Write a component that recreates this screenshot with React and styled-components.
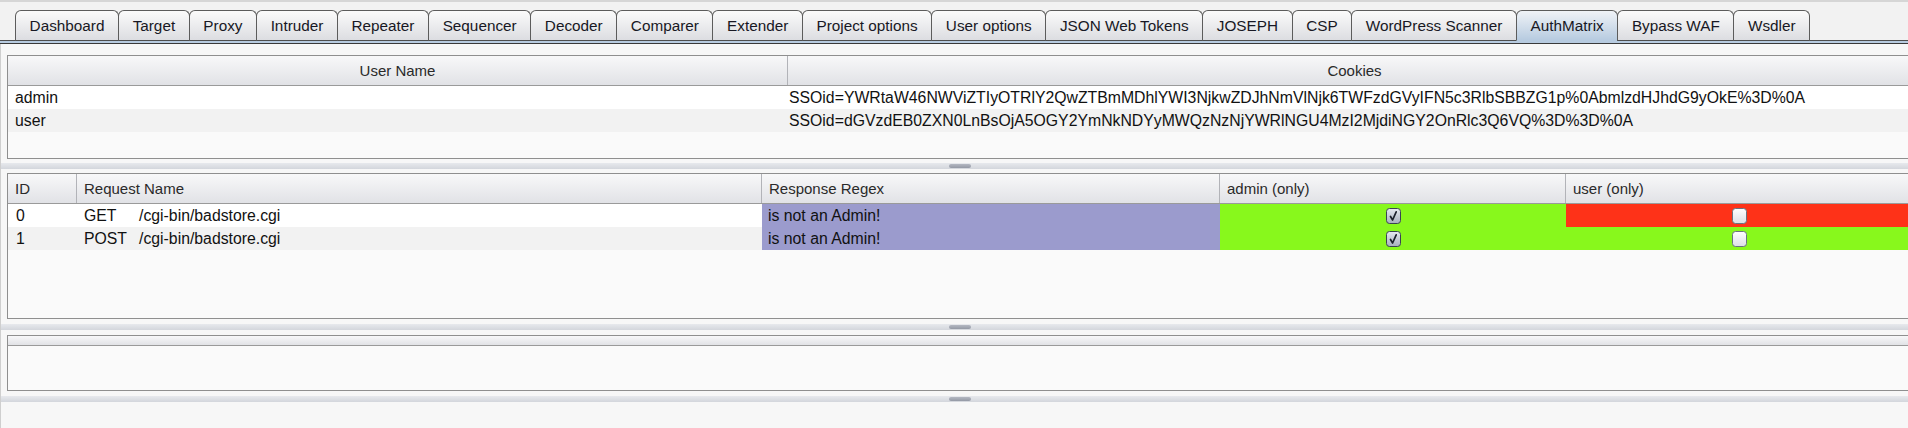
import React from 'react'
import styled, { createGlobalStyle } from 'styled-components'

const GlobalStyle = createGlobalStyle`
  body {
    margin: 0;
    background: #f7f7f7;
    font-family: "Liberation Sans", Arial, sans-serif;
    overflow: hidden;
  }
`

const tabs = [
  'Dashboard', 'Target', 'Proxy', 'Intruder', 'Repeater', 'Sequencer', 'Decoder',
  'Comparer', 'Extender', 'Project options', 'User options', 'JSON Web Tokens',
  'JOSEPH', 'CSP', 'WordPress Scanner', 'AuthMatrix', 'Bypass WAF', 'Wsdler',
]

const users = [
  { name: 'admin', cookie: 'SSOid=YWRtaW46NWViZTIyOTRlY2QwZTBmMDhlYWI3NjkwZDJhNmVlNjk6TWFzdGVyIFN5c3RlbSBBZG1p%0AbmlzdHJhdG9yOkE%3D%0A' },
  { name: 'user', cookie: 'SSOid=dGVzdEB0ZXN0LnBsOjA5OGY2YmNkNDYyMWQzNzNjYWRlNGU4MzI2MjdiNGY2OnRlc3Q6VQ%3D%3D%0A' },
]

const requests = [
  { id: 0, method: 'GET', path: '/cgi-bin/badstore.cgi', regex: 'is not an Admin!', admin: true, user: false, userOk: false },
  { id: 1, method: 'POST', path: '/cgi-bin/badstore.cgi', regex: 'is not an Admin!', admin: true, user: false, userOk: true },
]

const GREEN = '#88f81c'
const RED = '#fe3218'
const PURPLE = '#9b9bcd'

const Frame = styled.div`
  width: 1908px;
  height: 428px;
  overflow: hidden;
  display: flex;
  flex-direction: column;
  background: #f7f7f7;
`

const TabBar = styled.div`
  display: flex;
  align-items: flex-end;
  height: 41px;
  box-sizing: border-box;
  padding-left: 15px;
  border-top: 2px solid #d6d6d6;
  background: linear-gradient(to top, #4e4e4e 0, #4e4e4e 1px, #f2f2f2 1px);
  flex-shrink: 0;
`

const Tab = styled.div`
  height: 31px;
  box-sizing: border-box;
  display: flex;
  align-items: center;
  padding: 0 13.6px;
  margin-left: -1px;
  border: 1px solid #5c5c5c;
  border-bottom-color: ${p => (p.$active ? '#b7cbe0' : '#4e4e4e')};
  border-radius: 6px 6px 0 0;
  background: ${p => (p.$active
    ? 'linear-gradient(#f0f3f7, #b7cbe0)'
    : 'linear-gradient(#fbfbfb, #dcdde1)')};
  font-size: 15.3px;
  color: #181824;
  white-space: nowrap;

  &:first-child {
    margin-left: 0;
  }
`

const Band = styled.div`
  height: 2px;
  background: #b7cbe0;
  border-bottom: 1px solid #3a3a3a;
  flex-shrink: 0;
`

const Content = styled.div`
  flex: 1;
  display: flex;
  flex-direction: column;
  padding-top: 11px;
  border-left: 1px solid #cfcfcf;
  overflow: hidden;
`

const Pane = styled.div`
  margin-left: 6px;
  width: ${p => p.$w}px;
  height: ${p => p.$h}px;
  box-sizing: border-box;
  border: 1px solid #8f8f8f;
  background: #fafafa;
  flex-shrink: 0;
  overflow: hidden;
`

const Splitter = styled.div`
  height: ${p => p.$h}px;
  display: flex;
  align-items: center;
  flex-shrink: 0;
`

const Strip = styled.div`
  flex: 1;
  height: 6px;
  display: flex;
  align-items: center;
  background: linear-gradient(#e7e9ed, #d3d6dc);
`

const Handle = styled.div`
  margin-left: 948px;
  width: 22px;
  height: 4px;
  border-radius: 2px;
  background: linear-gradient(#b4b8c2, #9499a5);
`

const HeaderRow = styled.div`
  display: grid;
  grid-template-columns: ${p => p.$cols};
  height: ${p => p.$h || 30}px;
  box-sizing: border-box;
  border-bottom: 1px solid #9a9a9a;
  background: linear-gradient(#f8f8f9, #e1e2e6);
`

const HeadCell = styled.div`
  display: flex;
  align-items: center;
  justify-content: ${p => (p.$center ? 'center' : 'flex-start')};
  padding-left: ${p => (p.$center ? 0 : 7)}px;
  border-right: 1px solid #b2b3b8;
  font-size: 15px;
  color: #2a2a2a;
  white-space: nowrap;
  overflow: hidden;
`

const BodyRow = styled.div`
  display: grid;
  grid-template-columns: ${p => p.$cols};
  height: 23px;
`

const Cell = styled.div`
  display: flex;
  align-items: center;
  justify-content: ${p => (p.$center ? 'center' : 'flex-start')};
  padding-left: ${p => (p.$center ? 0 : p.$pad ?? 7)}px;
  background: ${p => p.$bg || 'transparent'};
  font-size: 15.8px;
  color: #111;
  white-space: nowrap;
  overflow: hidden;
`

const Method = styled.span`
  display: inline-block;
  width: 55px;
`

const Box = styled.svg`
  display: block;
`

function CheckBox({ checked }) {
  const id = checked ? 'cbOn' : 'cbOff'
  return (
    <Box width="15" height="16" viewBox="0 0 15 16">
      <defs>
        <linearGradient id={id} x1="0" y1="0" x2="0" y2="1">
          <stop offset="0" stopColor={checked ? '#e6eaf0' : '#ffffff'} />
          <stop offset="1" stopColor={checked ? '#a6afbc' : '#dcdfe6'} />
        </linearGradient>
      </defs>
      <rect x="0.5" y="0.5" width="14" height="15" rx="3" fill={`url(#${id})`} stroke={checked ? '#3a4450' : '#69727e'} />
      {checked && (
        <path d="M4.5 8.5 L6.6 12 L10.2 3.8" fill="none" stroke="#1c222c" strokeWidth="1.7" strokeLinecap="round" strokeLinejoin="round" />
      )}
    </Box>
  )
}

const cookieCols = '780px 1134px'
const requestCols = '69px 685px 458px 346px 346px'

export default function App() {
  return (
    <Frame>
      <GlobalStyle />
      <TabBar>
        {tabs.map(t => (
          <Tab key={t} $active={t === 'AuthMatrix'}>{t}</Tab>
        ))}
      </TabBar>
      <Band />
      <Content>
        <Pane $w={1916} $h={104}>
          <HeaderRow $cols={cookieCols}>
            <HeadCell $center>User Name</HeadCell>
            <HeadCell $center>Cookies</HeadCell>
          </HeaderRow>
          {users.map((u, i) => (
            <BodyRow key={u.name} $cols={cookieCols}>
              <Cell $pad={7} $bg={i % 2 ? '#f2f2f2' : '#ffffff'}>{u.name}</Cell>
              <Cell $pad={1} $bg={i % 2 ? '#f2f2f2' : '#ffffff'}>{u.cookie}</Cell>
            </BodyRow>
          ))}
        </Pane>
        <Splitter $h={14}><Strip><Handle /></Strip></Splitter>
        <Pane $w={1910} $h={146}>
          <HeaderRow $cols={requestCols}>
            <HeadCell>ID</HeadCell>
            <HeadCell>Request Name</HeadCell>
            <HeadCell>Response Regex</HeadCell>
            <HeadCell>admin (only)</HeadCell>
            <HeadCell>user (only)</HeadCell>
          </HeaderRow>
          {requests.map((r, i) => {
            const row = i % 2 ? '#f2f2f2' : '#ffffff'
            return (
              <BodyRow key={r.id} $cols={requestCols}>
                <Cell $pad={8} $bg={row}>{r.id}</Cell>
                <Cell $pad={7} $bg={row}><Method>{r.method}</Method>{r.path}</Cell>
                <Cell $pad={6} $bg={PURPLE}>{r.regex}</Cell>
                <Cell $center $bg={GREEN}><CheckBox checked={r.admin} /></Cell>
                <Cell $center $bg={r.userOk ? GREEN : RED}><CheckBox checked={r.user} /></Cell>
              </BodyRow>
            )
          })}
        </Pane>
        <Splitter $h={16}><Strip><Handle /></Strip></Splitter>
        <Pane $w={1930} $h={56}>
          <HeaderRow $cols="1fr" $h={10} />
        </Pane>
        <Splitter $h={16}><Strip><Handle /></Strip></Splitter>
      </Content>
    </Frame>
  )
}
